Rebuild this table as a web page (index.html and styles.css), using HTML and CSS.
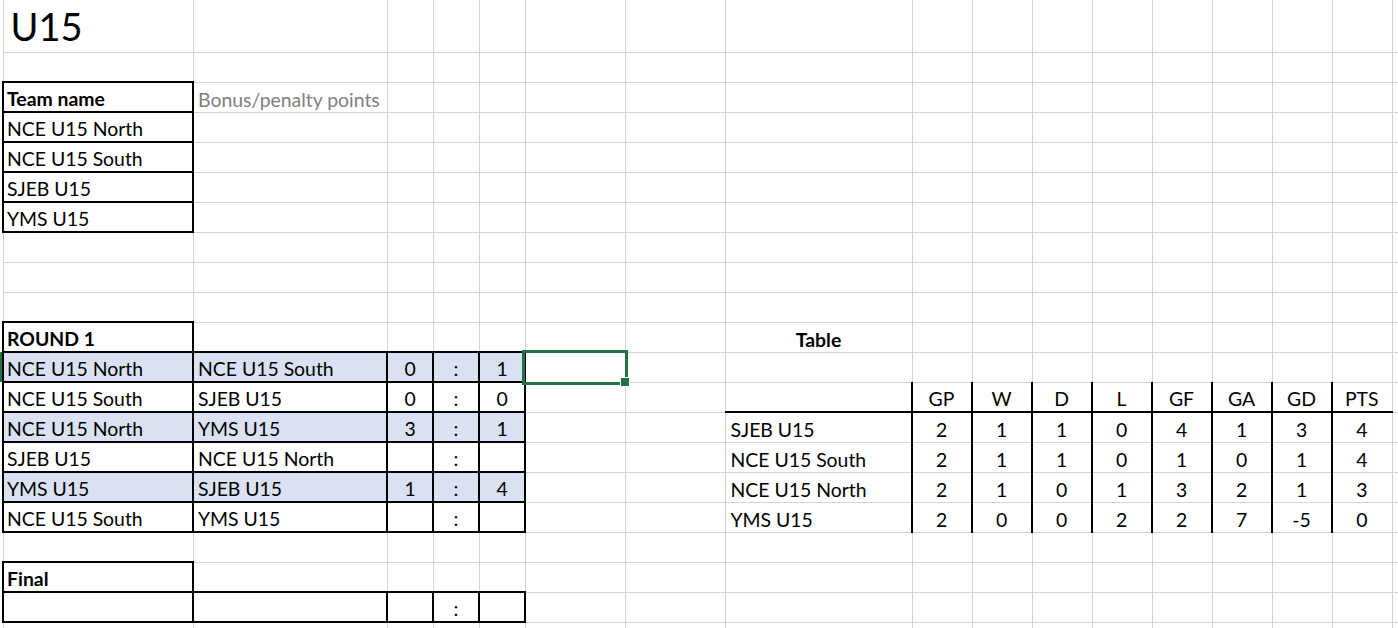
FILE: index.html
```html
<!DOCTYPE html>
<html lang="en">
<head>
<meta charset="utf-8">
<title>U15</title>
<link rel="stylesheet" href="styles.css">
</head>
<body>
<div class="sheet">
  <table class="grid">
    <colgroup>
      <col class="c-a"><col class="c-b"><col class="c-s"><col class="c-s"><col class="c-s">
      <col class="c-f"><col class="c-f"><col class="c-h">
      <col class="c-n"><col class="c-n"><col class="c-n"><col class="c-n">
      <col class="c-n"><col class="c-n"><col class="c-n"><col class="c-n"><col class="c-n">
    </colgroup>
    <tr class="r-title"><td class="title">U15</td><td></td><td></td><td></td><td></td><td></td><td></td><td></td><td></td><td></td><td></td><td></td><td></td><td></td><td></td><td></td><td></td></tr>
    <tr><td></td><td></td><td></td><td></td><td></td><td></td><td></td><td></td><td></td><td></td><td></td><td></td><td></td><td></td><td></td><td></td><td></td></tr>
    <tr><td class="b bold">Team name</td><td class="muted">Bonus/penalty points</td><td></td><td></td><td></td><td></td><td></td><td></td><td></td><td></td><td></td><td></td><td></td><td></td><td></td><td></td><td></td></tr>
    <tr><td class="b">NCE U15 North</td><td></td><td></td><td></td><td></td><td></td><td></td><td></td><td></td><td></td><td></td><td></td><td></td><td></td><td></td><td></td><td></td></tr>
    <tr><td class="b">NCE U15 South</td><td></td><td></td><td></td><td></td><td></td><td></td><td></td><td></td><td></td><td></td><td></td><td></td><td></td><td></td><td></td><td></td></tr>
    <tr><td class="b">SJEB U15</td><td></td><td></td><td></td><td></td><td></td><td></td><td></td><td></td><td></td><td></td><td></td><td></td><td></td><td></td><td></td><td></td></tr>
    <tr><td class="b">YMS U15</td><td></td><td></td><td></td><td></td><td></td><td></td><td></td><td></td><td></td><td></td><td></td><td></td><td></td><td></td><td></td><td></td></tr>
    <tr><td></td><td></td><td></td><td></td><td></td><td></td><td></td><td></td><td></td><td></td><td></td><td></td><td></td><td></td><td></td><td></td><td></td></tr>
    <tr><td></td><td></td><td></td><td></td><td></td><td></td><td></td><td></td><td></td><td></td><td></td><td></td><td></td><td></td><td></td><td></td><td></td></tr>
    <tr><td></td><td></td><td></td><td></td><td></td><td></td><td></td><td></td><td></td><td></td><td></td><td></td><td></td><td></td><td></td><td></td><td></td></tr>
    <tr><td class="b bold">ROUND 1</td><td></td><td></td><td></td><td></td><td></td><td></td><td class="bold center">Table</td><td></td><td></td><td></td><td></td><td></td><td></td><td></td><td></td><td></td></tr>
    <tr class="fill"><td class="b">NCE U15 North</td><td class="b">NCE U15 South</td><td class="b center">0</td><td class="b center">:</td><td class="b center">1</td><td></td><td></td><td></td><td></td><td></td><td></td><td></td><td></td><td></td><td></td><td></td><td></td></tr>
    <tr><td class="b">NCE U15 South</td><td class="b">SJEB U15</td><td class="b center">0</td><td class="b center">:</td><td class="b center">0</td><td></td><td></td><td class="hb"></td><td class="th">GP</td><td class="th">W</td><td class="th">D</td><td class="th">L</td><td class="th">GF</td><td class="th">GA</td><td class="th">GD</td><td class="th">PTS</td><td></td></tr>
    <tr class="fill"><td class="b">NCE U15 North</td><td class="b">YMS U15</td><td class="b center">3</td><td class="b center">:</td><td class="b center">1</td><td></td><td></td><td class="team">SJEB U15</td><td class="tv">2</td><td class="tv">1</td><td class="tv">1</td><td class="tv">0</td><td class="tv">4</td><td class="tv">1</td><td class="tv">3</td><td class="tv">4</td><td></td></tr>
    <tr><td class="b">SJEB U15</td><td class="b">NCE U15 North</td><td class="b center"></td><td class="b center">:</td><td class="b center"></td><td></td><td></td><td class="team">NCE U15 South</td><td class="tv">2</td><td class="tv">1</td><td class="tv">1</td><td class="tv">0</td><td class="tv">1</td><td class="tv">0</td><td class="tv">1</td><td class="tv">4</td><td></td></tr>
    <tr class="fill"><td class="b">YMS U15</td><td class="b">SJEB U15</td><td class="b center">1</td><td class="b center">:</td><td class="b center">4</td><td></td><td></td><td class="team">NCE U15 North</td><td class="tv">2</td><td class="tv">1</td><td class="tv">0</td><td class="tv">1</td><td class="tv">3</td><td class="tv">2</td><td class="tv">1</td><td class="tv">3</td><td></td></tr>
    <tr><td class="b">NCE U15 South</td><td class="b">YMS U15</td><td class="b center"></td><td class="b center">:</td><td class="b center"></td><td></td><td></td><td class="team">YMS U15</td><td class="tv">2</td><td class="tv">0</td><td class="tv">0</td><td class="tv">2</td><td class="tv">2</td><td class="tv">7</td><td class="tv">-5</td><td class="tv">0</td><td></td></tr>
    <tr><td></td><td></td><td></td><td></td><td></td><td></td><td></td><td></td><td></td><td></td><td></td><td></td><td></td><td></td><td></td><td></td><td></td></tr>
    <tr><td class="b bold">Final</td><td></td><td></td><td></td><td></td><td></td><td></td><td></td><td></td><td></td><td></td><td></td><td></td><td></td><td></td><td></td><td></td></tr>
    <tr><td class="b"></td><td class="b"></td><td class="b center"></td><td class="b center">:</td><td class="b center"></td><td></td><td></td><td></td><td></td><td></td><td></td><td></td><td></td><td></td><td></td><td></td><td></td></tr>
    <tr><td></td><td></td><td></td><td></td><td></td><td></td><td></td><td></td><td></td><td></td><td></td><td></td><td></td><td></td><td></td><td></td><td></td></tr>
  </table>
  <div class="row-mark"></div>
  <div class="selection"><span class="handle"></span></div>
</div>
</body>
</html>
```
FILE: styles.css
```css
html, body {
  margin: 0;
  padding: 0;
  background: #fff;
}

.sheet {
  position: relative;
  width: 1398px;
  height: 628px;
  overflow: hidden;
  padding-left: 2px;
  box-sizing: border-box;
  font-family: Lato, "Noto Sans", sans-serif;
  font-size: 19.4px;
  color: #000;
}

.grid {
  border-collapse: collapse;
  table-layout: fixed;
  width: 1450px;
}

.c-a { width: 190px; }
.c-b { width: 194px; }
.c-s { width: 46px; }
.c-f { width: 100px; }
.c-h { width: 187px; }
.c-n { width: 60px; }

.grid tr { height: 30px; }
.grid tr.r-title { height: 52px; }

.grid td {
  border-right: 1px solid #d4d4d4;
  border-bottom: 1px solid #d4d4d4;
  padding: 0 5px 1px 4px;
  vertical-align: bottom;
  white-space: nowrap;
  line-height: 22px;
  overflow: visible;
}

.grid td:first-child {
  border-left: 1px solid #d4d4d4;
  padding-left: 3px;
}

.grid td.title {
  font-size: 38px;
  line-height: 40px;
  padding: 0 7px 6px 7px;
}

.grid td.b {
  border: 2px solid #000;
}

.grid tr.fill td.b {
  background: #d9e1f2;
}

.bold { font-weight: 700; }
.grid td.center { text-align: center; padding-left: 5px; }

.muted { color: #7f7f7f; }

.grid td.hb {
  border-bottom: 2px solid #000;
}

.grid td.th {
  border-left: 2px solid #000;
  border-bottom: 2px solid #000;
  text-align: center;
}

.grid td.tv {
  border-left: 2px solid #000;
  text-align: center;
}

.grid td.team {
  padding-left: 5px;
}

.row-mark {
  position: absolute;
  left: 0;
  top: 352px;
  width: 2px;
  height: 30px;
  background: #217346;
}

.selection {
  position: absolute;
  left: 522px;
  top: 350px;
  width: 106px;
  height: 35px;
  box-sizing: border-box;
  border: 3px solid #217346;
}

.handle {
  position: absolute;
  right: -5px;
  bottom: -5px;
  width: 8px;
  height: 8px;
  background: #217346;
  border: 1px solid #fff;
}
```
